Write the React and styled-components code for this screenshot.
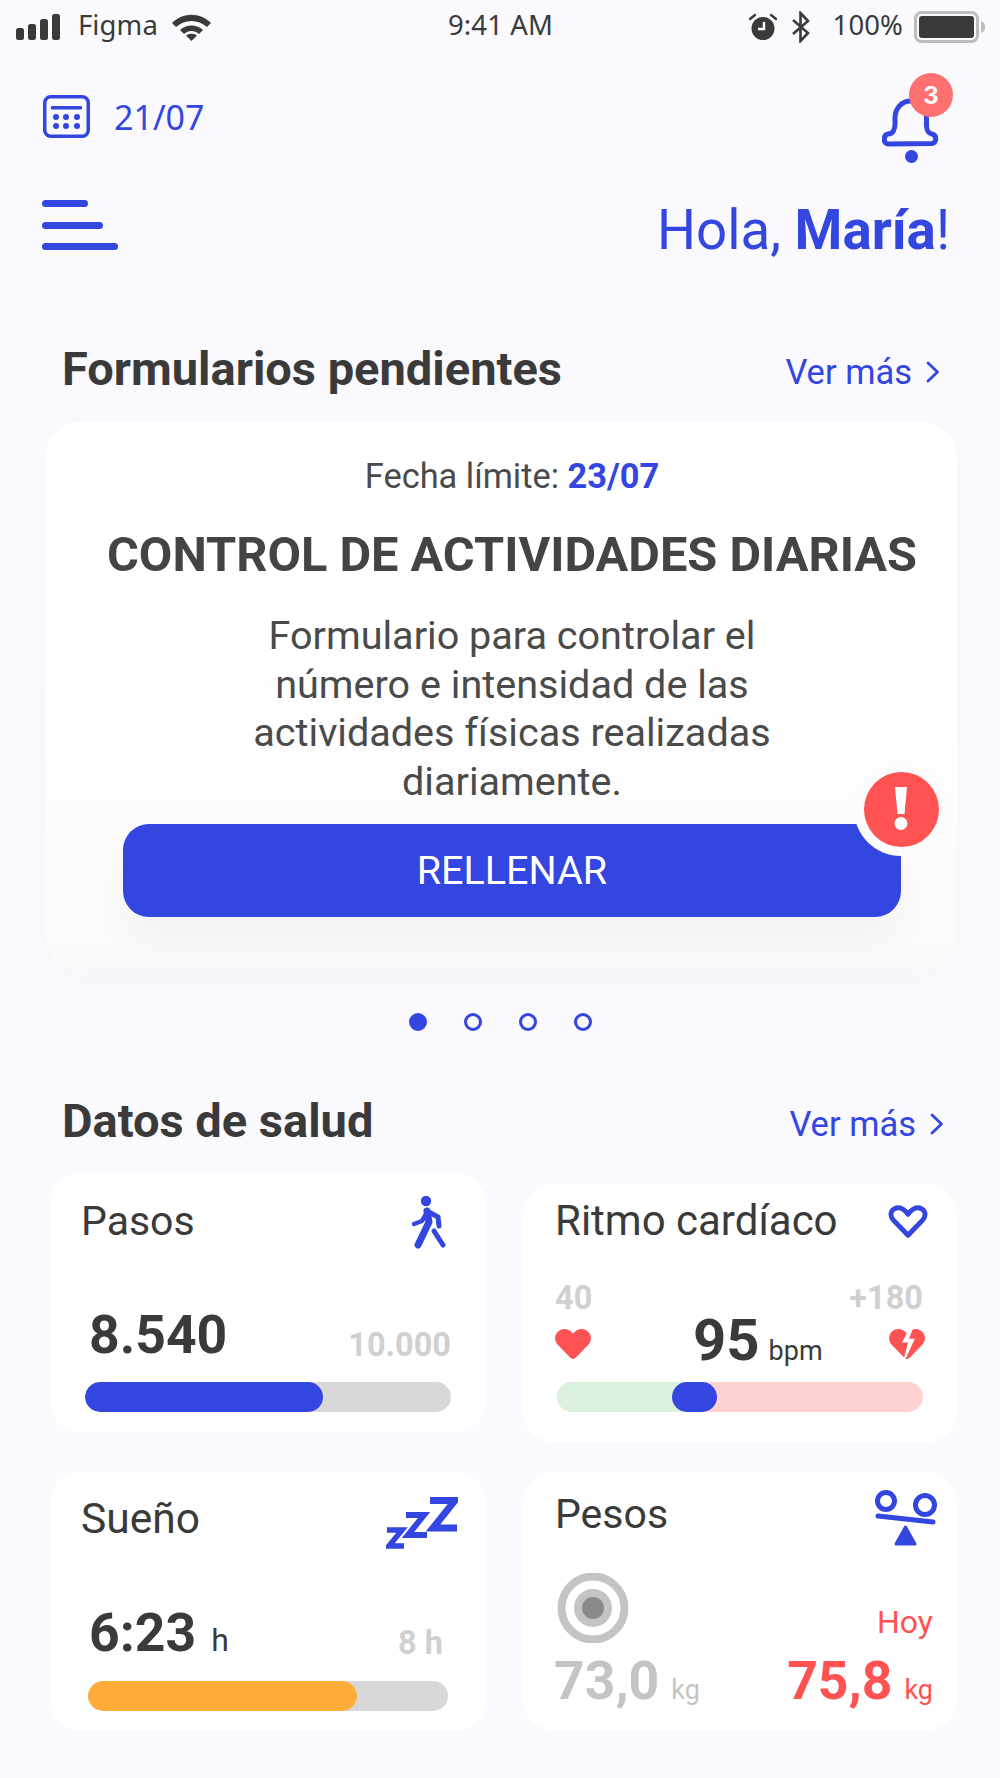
import React from 'react';
import styled, { createGlobalStyle } from 'styled-components';

const BLUE = '#3346e0';
const DARK = '#3a3a3a';
const RED = '#ff5252';
const LIGHT = '#d0d0d0';

const GlobalStyle = createGlobalStyle`
    html, body {
        margin: 0;
        padding: 0;
        background: #f9f9fe;
    }
    * {
        box-sizing: border-box;
    }
`;

const Page = styled.div`
    width: 1000px;
    height: 1778px;
    overflow: hidden;
    background: #f9f9fe;
    font-family: Roboto, "Liberation Sans", sans-serif;
    color: ${DARK};
`;

const StatusBar = styled.div`
    display: grid;
    grid-template-columns: 1fr auto 1fr;
    align-items: center;
    height: 54px;
    padding: 0 15px 0 16px;
    font-family: "Noto Sans", sans-serif;
    font-size: 27.5px;
    color: ${DARK};
`;

const StatusSide = styled.div`
    display: flex;
    align-items: center;
    justify-content: ${props => props.$end ? 'flex-end' : 'flex-start'};
`;

const StatusText = styled.span`
    margin-left: ${props => props.$left || 0}px;
    margin-right: ${props => props.$right || 0}px;
    padding-bottom: 5px;
    letter-spacing: 0.1px;
`;

const TopRow = styled.div`
    display: flex;
    align-items: center;
    justify-content: space-between;
    height: 93px;
    margin-top: 16px;
    padding: 0 60px 0 43px;
`;

const DateGroup = styled.div`
    display: flex;
    align-items: center;
    gap: 24px;
    color: ${BLUE};
    font-family: "Noto Sans", sans-serif;
    font-size: 34px;
`;

const BellWrap = styled.div`
    position: relative;
    width: 58px;
    height: 66px;
    margin-top: 29px;
`;

const Badge = styled.div`
    position: absolute;
    top: -25px;
    right: -13px;
    width: 44px;
    height: 44px;
    border-radius: 50%;
    background: #ff7070;
    color: #fff;
    font-family: Inter, sans-serif;
    font-weight: 700;
    font-size: 24px;
    display: flex;
    align-items: center;
    justify-content: center;
`;

const MenuRow = styled.div`
    display: flex;
    align-items: center;
    justify-content: space-between;
    height: 70px;
    margin-top: 27px;
    padding: 0 50px 0 42px;
`;

const Burger = styled.div`
    display: flex;
    flex-direction: column;
    gap: 14.5px;
`;

const BurgerLine = styled.div`
    width: ${props => props.$w}px;
    height: 7px;
    border-radius: 4px;
    background: ${BLUE};
`;

const Greeting = styled.div`
    margin-top: 10px;
    font-size: 54.7px;
    color: ${BLUE};
    line-height: 1;

    b {
        font-weight: 700;
    }
`;

const SectionHead = styled.div`
    display: flex;
    align-items: center;
    justify-content: space-between;
    height: 56px;
    margin-top: ${props => props.$top}px;
    padding: 0 ${props => props.$right}px 0 62px;
`;

const SectionTitle = styled.h2`
    margin: 0;
    font-size: 47px;
    font-weight: 700;
    color: ${DARK};
`;

const MoreLink = styled.a`
    display: flex;
    align-items: center;
    gap: 14px;
    padding-top: 7px;
    font-size: 34.5px;
    color: ${BLUE};
    text-decoration: none;
`;

const FormCard = styled.div`
    height: 548px;
    margin: 26px 43px 0 45px;
    padding: 34px 56px 0 78px;
    border-radius: 36px;
    background: linear-gradient(180deg, #ffffff 40%, #fafafa 100%);
    box-shadow: 0 10px 40px rgba(60, 60, 120, 0.02);
    display: flex;
    flex-direction: column;
    align-items: center;
    text-align: center;
`;

const Deadline = styled.div`
    font-size: 34.4px;
    line-height: 40px;
    color: #4a4a4a;

    b {
        color: ${BLUE};
        font-weight: 700;
    }
`;

const FormTitle = styled.h3`
    margin: 31px 0 0;
    font-size: 48.7px;
    line-height: 56px;
    font-weight: 700;
    white-space: nowrap;
    color: #444;
`;

const FormText = styled.p`
    margin: 29px 0 0;
    width: 600px;
    font-size: 39.6px;
    line-height: 48.5px;
    color: #4a4a4a;
`;

const FillButton = styled.button`
    position: relative;
    flex: none;
    width: 778px;
    height: 93px;
    margin-top: 18px;
    border: 0;
    border-radius: 26px;
    background: ${BLUE};
    color: #fff;
    font-family: inherit;
    font-size: 39.5px;
    box-shadow: 0 24px 40px rgba(40, 40, 80, 0.03);
`;

const AlertRing = styled.div`
    position: absolute;
    top: -62px;
    right: -47px;
    width: 94px;
    height: 94px;
    border-radius: 50%;
    background: #fcfcfc;
    display: flex;
    align-items: center;
    justify-content: center;
`;

const AlertDot = styled.div`
    width: 75px;
    height: 75px;
    border-radius: 50%;
    background: ${RED};
    display: flex;
    align-items: center;
    justify-content: center;
`;

const Dots = styled.div`
    display: flex;
    justify-content: center;
    gap: 37px;
    margin-top: 43px;
`;

const Dot = styled.div`
    width: 18px;
    height: 18px;
    border-radius: 50%;
    border: 3px solid ${BLUE};
    background: ${props => props.$on ? BLUE : 'transparent'};
`;

const HealthGrid = styled.div`
    display: grid;
    grid-template-columns: 436px 434px;
    column-gap: 37px;
    row-gap: 30px;
    margin-top: 25px;
    padding-left: 50px;
    align-items: start;
`;

const Card = styled.div`
    display: flex;
    flex-direction: column;
    height: ${props => props.$h || 258}px;
    margin-top: ${props => props.$top || 0}px;
    padding: ${props => props.$pt || 22}px ${props => props.$px || 35}px ${props => props.$pb || 20}px;
    border-radius: 30px;
    background: #fff;
`;

const CardHead = styled.div`
    display: flex;
    justify-content: space-between;
    align-items: flex-start;
    margin-left: ${props => props.$ml || 0}px;
    margin-right: ${props => props.$mr || 0}px;
`;

const CardTitle = styled.div`
    margin-top: ${props => props.$top || 2}px;
    font-size: ${props => props.$size || 41}px;
    line-height: 48px;
    color: ${DARK};
`;

const IconBox = styled.div`
    display: flex;
    margin-top: ${props => props.$top || 0}px;
`;

const ValueRow = styled.div`
    display: flex;
    justify-content: space-between;
    align-items: flex-end;
    margin-top: auto;
    margin-bottom: ${props => props.$mb || 21}px;
    padding-left: ${props => props.$pl || 0}px;
    padding-right: ${props => props.$pr || 0}px;
`;

const BigValue = styled.div`
    font-size: ${props => props.$size || 53.5}px;
    line-height: 1;
    font-weight: 700;
    color: ${props => props.$color || DARK};
    white-space: nowrap;
`;

const Unit = styled.span`
    margin-left: ${props => props.$left || 12}px;
    font-size: ${props => props.$size || 32}px;
    font-weight: 400;
`;

const Goal = styled.div`
    margin-left: ${props => props.$ml || 0}px;
    font-size: 32.5px;
    line-height: 1;
    font-weight: 700;
    color: ${LIGHT};
    white-space: nowrap;
`;

const Track = styled.div`
    position: relative;
    flex: none;
    height: 30px;
    border-radius: 15px;
    overflow: hidden;
    background: ${props => props.$bg || '#d8d8d8'};
`;

const Fill = styled.div`
    height: 100%;
    border-radius: 15px;
    background: ${props => props.$color};
`;

const RangeZone = styled.div`
    position: absolute;
    left: 0;
    top: 0;
    bottom: 0;
    width: ${props => props.$w}px;
    background: #dbf1e0;
`;

const Knob = styled.div`
    position: absolute;
    top: 0;
    left: 115px;
    width: 45px;
    height: 30px;
    border-radius: 15px;
    background: ${BLUE};
`;

const SideCol = styled.div`
    display: flex;
    flex-direction: column;
    align-items: ${props => props.$end ? 'flex-end' : 'flex-start'};
    gap: 14px;
    width: ${props => props.$w}px;
    margin-left: ${props => props.$auto ? 'auto' : '0'};
    padding-bottom: 9px;
`;

const HeartSlot = styled.div`
    display: flex;
    margin: ${props => props.$end ? '0 -3px 0 0' : '0 0 0 -3px'};
`;

const WeightCols = styled.div`
    display: flex;
    justify-content: space-between;
    align-items: flex-end;
    margin-top: auto;
    margin-right: -9px;
`;

const WeightCol = styled.div`
    display: flex;
    flex-direction: column;
    align-items: ${props => props.$end ? 'flex-end' : 'flex-start'};
    gap: ${props => props.$gap}px;
    margin-left: ${props => props.$ml || 0}px;
`;

const TargetSlot = styled.div`
    display: flex;
    margin-left: 3px;
`;

const Today = styled.div`
    font-size: 32px;
    line-height: 36px;
    color: ${RED};
`;

const SignalIcon = () => (
    <svg width="45" height="28" viewBox="0 0 45 28">
        <rect x="0" y="15" width="8" height="12" rx="2.5" fill={DARK} />
        <rect x="12" y="11" width="8" height="16" rx="2.5" fill={DARK} />
        <rect x="24" y="6" width="8" height="21" rx="2.5" fill={DARK} />
        <rect x="36" y="1" width="8" height="26" rx="2.5" fill={DARK} />
    </svg>
);

const WifiIcon = () => (
    <svg width="39" height="28" viewBox="0 0 39 28">
        <path d="M0 10 C11 -1 28 -1 39 10 L35 14 C26 6 13 6 4 14 Z" fill={DARK} />
        <path d="M8 17 C14 11 25 11 31 17 L27 21 C23 17 16 17 12 21 Z" fill={DARK} />
        <path d="M14 22.5 C17 20 22 20 25 22.5 L19.5 28 Z" fill={DARK} />
    </svg>
);

const AlarmIcon = () => (
    <svg width="28" height="28" viewBox="0 0 28 28">
        <circle cx="14" cy="15.5" r="11.5" fill={DARK} />
        <path d="M1 6 L6 2 M27 6 L22 2" stroke={DARK} strokeWidth="2.5" strokeLinecap="round" />
        <path d="M15 9 V16 H9" stroke="#fff" strokeWidth="2.4" fill="none" />
    </svg>
);

const BluetoothIcon = () => (
    <svg width="20" height="32" viewBox="0 0 20 32">
        <path d="M2 9 L17 22 L9.5 30 V2 L17 10 L2 23" stroke={DARK} strokeWidth="2.6" fill="none" />
    </svg>
);

const BatteryIcon = () => (
    <svg width="71" height="32" viewBox="0 0 71 32">
        <rect x="1.5" y="1.5" width="62" height="29" rx="6" fill="none" stroke="#bdbdbd" strokeWidth="3" />
        <rect x="5" y="5" width="55" height="22" rx="3" fill={DARK} />
        <path d="M67 10 C70 11 71 13 71 16 C71 19 70 21 67 22 Z" fill="#bdbdbd" />
    </svg>
);

const CalendarIcon = () => (
    <svg width="47" height="43" viewBox="0 0 47 43" fill={BLUE}>
        <rect x="1.75" y="1.75" width="43.5" height="39.5" rx="6" fill="none" stroke={BLUE} strokeWidth="3.5" />
        <rect x="8" y="11" width="31" height="3.5" rx="1" />
        {[13, 23, 34].map(x => [22, 31].map(y => <circle key={x + '-' + y} cx={x} cy={y} r="3" />))}
    </svg>
);

const BellIcon = () => (
    <svg width="58" height="66" viewBox="0 0 58 66">
        <path
            d="M29 3 C19 3 13 11 13 20 V26 C13 31 11 36 6 36 C1 37 1 46 6 46 L50 45.5 C55 45 55 37 50 36 C46 35 44.5 33 44.5 27 V20 C44.5 11 38 3 29 3 Z"
            fill="none"
            stroke={BLUE}
            strokeWidth="5"
        />
        <circle cx="29.5" cy="58.5" r="6.5" fill={BLUE} />
    </svg>
);

const ChevronIcon = () => (
    <svg width="14" height="24" viewBox="0 0 14 24">
        <path d="M2 3 L11.5 12 L2 21" fill="none" stroke={BLUE} strokeWidth="2.8" strokeLinecap="round" strokeLinejoin="round" />
    </svg>
);

const AlertMark = () => (
    <svg width="16" height="44" viewBox="0 0 16 44">
        <path d="M2 0 H14 L11.5 27 H4.5 Z" fill="#fff" />
        <circle cx="8" cy="36.5" r="6.5" fill="#fff" />
    </svg>
);

const WalkIcon = () => (
    <svg width="34" height="54" viewBox="0 0 34 54" fill="none" stroke={BLUE} strokeLinecap="round" strokeLinejoin="round">
        <circle cx="14" cy="6" r="5.2" fill={BLUE} stroke="none" />
        <path d="M2 29 L10 26 L15 17" strokeWidth="4.5" />
        <path d="M15 16 L26 22 L27 31" strokeWidth="5" />
        <path d="M15 16 L17 27 L6 50" strokeWidth="7" />
        <path d="M22 36 L31 50" strokeWidth="5" />
    </svg>
);

const HeartPath = 'M19 32 C17.5 32 16.5 31 15 29.5 L3 17 C-1 12.5 0 5.5 5 2.5 C10 -0.5 15.5 1 19 6 C22.5 1 28 -0.5 33 2.5 C38 5.5 39 12.5 35 17 L23 29.5 C21.5 31 20.5 32 19 32 Z';

const HeartOutlineIcon = () => (
    <svg width="40" height="33" viewBox="1 1.5 36 30">
        <path d="M19 29 L5.5 15 C2.5 11.5 3 7 6.5 5 C10.5 3 15 4.5 19 10 C23 4.5 27.5 3 31.5 5 C35 7 35.5 11.5 32.5 15 Z" fill="none" stroke={BLUE} strokeWidth="4.5" strokeLinejoin="round" />
    </svg>
);

const HeartIcon = () => (
    <svg width="38" height="32" viewBox="0 0 38 33">
        <path d={HeartPath} fill={RED} />
    </svg>
);

const BrokenHeartIcon = () => (
    <svg width="38" height="32" viewBox="0 0 38 33">
        <path d={HeartPath} fill={RED} />
        <path d="M21 1 L14 15 L20 15 L16 31 L18 31 L27 11 L21 11 L25 1 Z" fill="#fff" />
    </svg>
);

const SleepIcon = () => (
    <svg width="72" height="52" viewBox="0 0 72 52" fill="none" stroke={BLUE} strokeWidth="5.5">
        <path d="M1 33 H16 L3 49 H18" />
        <path d="M20 18 H38 L22 38 H41" strokeWidth="6" />
        <path d="M44 3.5 H69 L47 31 H71" strokeWidth="7" />
    </svg>
);

const ScaleIcon = () => (
    <svg width="66" height="60" viewBox="0 0 66 60">
        <circle cx="15" cy="13" r="8.5" fill="none" stroke={BLUE} strokeWidth="5" />
        <circle cx="54" cy="17" r="9.5" fill="none" stroke={BLUE} strokeWidth="5" />
        <path d="M7 28 L62 34" stroke={BLUE} strokeWidth="5" strokeLinecap="round" />
        <path d="M34.5 39 L44 56 H25 Z" fill={BLUE} stroke={BLUE} strokeWidth="3" strokeLinejoin="round" />
    </svg>
);

const TargetIcon = () => (
    <svg width="72" height="70" viewBox="0 0 72 70">
        <circle cx="36" cy="35" r="31.5" fill="none" stroke="#c4c4c4" strokeWidth="8" />
        <circle cx="36" cy="35" r="19" fill="#c4c4c4" />
        <circle cx="36" cy="35" r="11" fill="#8a8a8a" />
    </svg>
);

const VerMas = () => (
    <MoreLink>
        Ver más
        <ChevronIcon />
    </MoreLink>
);

export default function App() {
    return (
        <Page>
            <GlobalStyle />
            <StatusBar>
                <StatusSide>
                    <SignalIcon />
                    <StatusText $left={17} $right={14}>Figma</StatusText>
                    <WifiIcon />
                </StatusSide>
                <StatusText>9:41 AM</StatusText>
                <StatusSide $end>
                    <AlarmIcon />
                    <StatusText $left={14} />
                    <BluetoothIcon />
                    <StatusText $left={22} $right={11}>100%</StatusText>
                    <BatteryIcon />
                </StatusSide>
            </StatusBar>

            <TopRow>
                <DateGroup>
                    <CalendarIcon />
                    21/07
                </DateGroup>
                <BellWrap>
                    <BellIcon />
                    <Badge>3</Badge>
                </BellWrap>
            </TopRow>

            <MenuRow>
                <Burger>
                    <BurgerLine $w={46} />
                    <BurgerLine $w={61} />
                    <BurgerLine $w={76} />
                </Burger>
                <Greeting>Hola, <b>María</b>!</Greeting>
            </MenuRow>

            <SectionHead $top={80} $right={60}>
                <SectionTitle>Formularios pendientes</SectionTitle>
                <VerMas />
            </SectionHead>

            <FormCard>
                <Deadline>Fecha límite: <b>23/07</b></Deadline>
                <FormTitle>CONTROL DE ACTIVIDADES DIARIAS</FormTitle>
                <FormText>Formulario para controlar el número e intensidad de las actividades físicas realizadas diariamente.</FormText>
                <FillButton>
                    RELLENAR
                    <AlertRing>
                        <AlertDot>
                            <AlertMark />
                        </AlertDot>
                    </AlertRing>
                </FillButton>
            </FormCard>

            <Dots>
                <Dot $on />
                <Dot />
                <Dot />
                <Dot />
            </Dots>

            <SectionHead $top={61} $right={56}>
                <SectionTitle>Datos de salud</SectionTitle>
                <VerMas />
            </SectionHead>

            <HealthGrid>
                <Card $h={259}>
                    <CardHead $ml={-4} $mr={5}>
                        <CardTitle>Pasos</CardTitle>
                        <WalkIcon />
                    </CardHead>
                    <ValueRow $pl={4}>
                        <BigValue>8.540</BigValue>
                        <Goal>10.000</Goal>
                    </ValueRow>
                    <Track>
                        <Fill $color={BLUE} style={{ width: `${(238 / 366) * 100}%` }} />
                    </Track>
                </Card>

                <Card $top={11} $pt={11} $px={34} $pb={30}>
                    <CardHead $ml={-2} $mr={-5}>
                        <CardTitle $size={42}>Ritmo cardíaco</CardTitle>
                        <IconBox $top={10}>
                            <HeartOutlineIcon />
                        </IconBox>
                    </CardHead>
                    <ValueRow $mb={13}>
                        <SideCol $w={136}>
                            <Goal $ml={-2}>40</Goal>
                            <HeartSlot>
                                <HeartIcon />
                            </HeartSlot>
                        </SideCol>
                        <BigValue $size={58}>95<Unit $size={27} $left={9}>bpm</Unit></BigValue>
                        <SideCol $end $auto>
                            <Goal>+180</Goal>
                            <HeartSlot $end>
                                <BrokenHeartIcon />
                            </HeartSlot>
                        </SideCol>
                    </ValueRow>
                    <Track $bg="#ffd2d2">
                        <RangeZone $w={135} />
                        <Knob />
                    </Track>
                </Card>

                <Card $px={38} $pb={19}>
                    <CardHead $ml={-7} $mr={-10}>
                        <CardTitle $size={42.5} $top={1}>Sueño</CardTitle>
                        <IconBox $top={3}>
                            <SleepIcon />
                        </IconBox>
                    </CardHead>
                    <ValueRow $pl={1} $pr={5} $mb={22}>
                        <BigValue>6:23<Unit $left={15}>h</Unit></BigValue>
                        <Goal>8 h</Goal>
                    </ValueRow>
                    <Track>
                        <Fill $color="#ffac38" style={{ width: `${(269 / 360) * 100}%` }} />
                    </Track>
                </Card>

                <Card $pt={16} $px={33} $pb={23}>
                    <CardHead $mr={-13} $ml={-1}>
                        <CardTitle>Pesos</CardTitle>
                        <ScaleIcon />
                    </CardHead>
                    <WeightCols>
                        <WeightCol $gap={11} $ml={-2}>
                            <TargetSlot>
                                <TargetIcon />
                            </TargetSlot>
                            <BigValue $color="#c4c4c4">73,0<Unit $size={27}>kg</Unit></BigValue>
                        </WeightCol>
                        <WeightCol $end $gap={14}>
                            <Today>Hoy</Today>
                            <BigValue $color={RED}>75,8<Unit $size={27}>kg</Unit></BigValue>
                        </WeightCol>
                    </WeightCols>
                </Card>
            </HealthGrid>
        </Page>
    );
}
